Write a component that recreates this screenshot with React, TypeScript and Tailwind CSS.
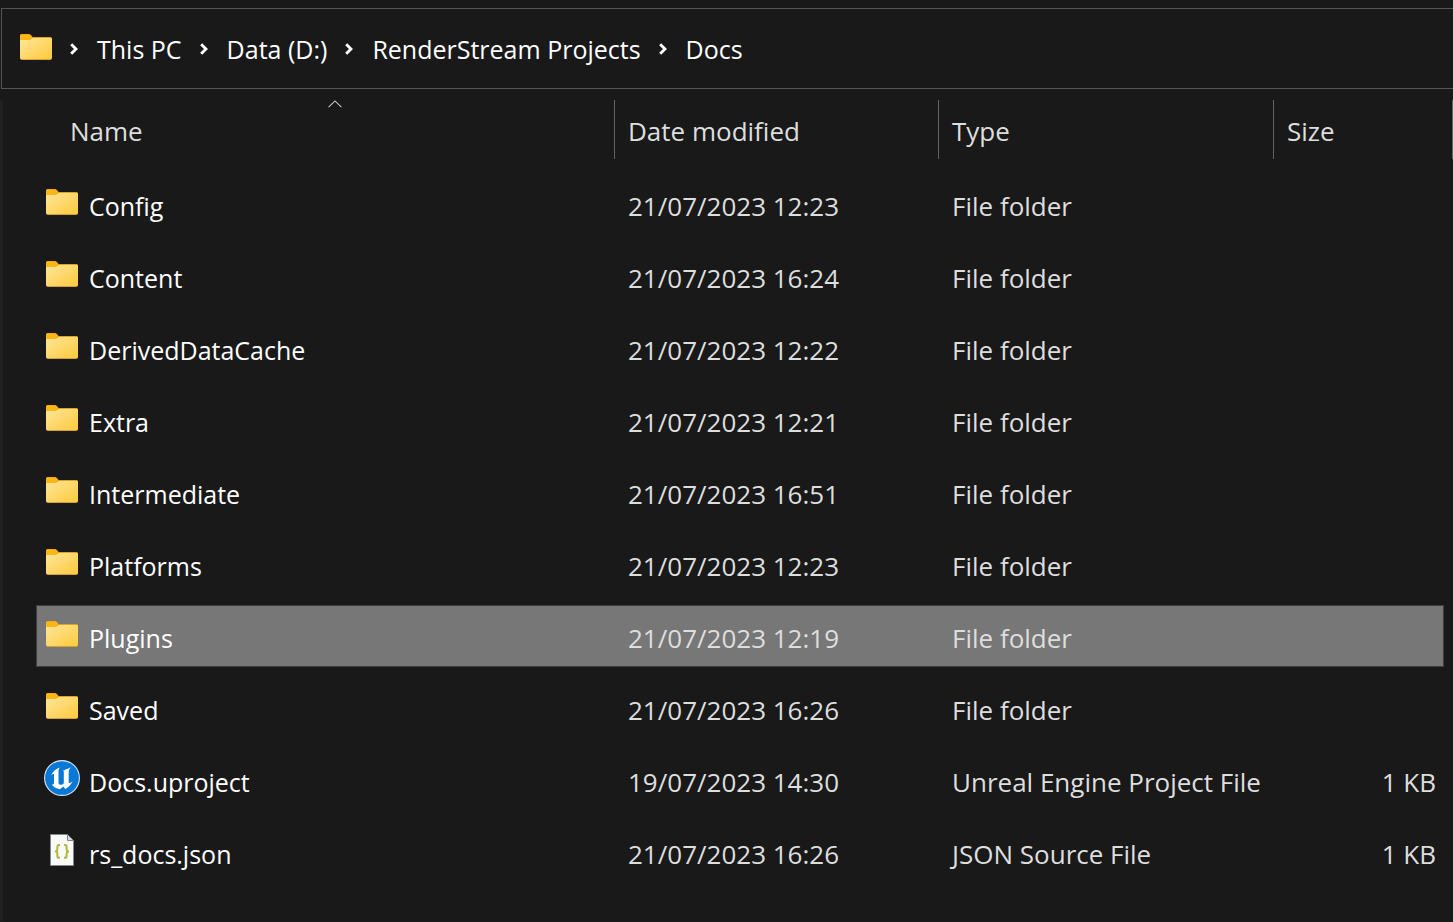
import React from 'react';

type FileKind = 'folder' | 'uproject' | 'json';

interface FileEntry {
  name: string;
  modified: string;
  type: string;
  kind: FileKind;
  size?: string;
  selected?: boolean;
}

const BREADCRUMBS = ['This PC', 'Data (D:)', 'RenderStream Projects', 'Docs'];

const FILES: FileEntry[] = [
  { name: 'Config', modified: '21/07/2023 12:23', type: 'File folder', kind: 'folder' },
  { name: 'Content', modified: '21/07/2023 16:24', type: 'File folder', kind: 'folder' },
  { name: 'DerivedDataCache', modified: '21/07/2023 12:22', type: 'File folder', kind: 'folder' },
  { name: 'Extra', modified: '21/07/2023 12:21', type: 'File folder', kind: 'folder' },
  { name: 'Intermediate', modified: '21/07/2023 16:51', type: 'File folder', kind: 'folder' },
  { name: 'Platforms', modified: '21/07/2023 12:23', type: 'File folder', kind: 'folder' },
  { name: 'Plugins', modified: '21/07/2023 12:19', type: 'File folder', kind: 'folder', selected: true },
  { name: 'Saved', modified: '21/07/2023 16:26', type: 'File folder', kind: 'folder' },
  { name: 'Docs.uproject', modified: '19/07/2023 14:30', type: 'Unreal Engine Project File', kind: 'uproject', size: '1 KB' },
  { name: 'rs_docs.json', modified: '21/07/2023 16:26', type: 'JSON Source File', kind: 'json', size: '1 KB' },
];

const FolderIcon = () => (
  <svg width="32" height="26" viewBox="0 0 32 26" aria-hidden="true">
    <defs>
      <linearGradient id="folder-front" x1="0" y1="0" x2="1" y2="1">
        <stop offset="0" stopColor="#ffe69c" />
        <stop offset="1" stopColor="#ffca3a" />
      </linearGradient>
    </defs>
    <path d="M0 1.5Q0 0 1.5 0H8.5Q10 0 11 1.2L12.6 3H30.5Q32 3 32 4.5V12H0Z" fill="#e0a21c" />
    <path d="M0 1.5Q0 .4 1.5 .4H8.5Q10 .4 11 1.5L12 3.2L9 6H0Z" fill="#fdb614" />
    <path d="M0 6H8.6Q10 6 10.8 5.2Q12 4 13.2 4H30.8Q32 4 32 5.2V24Q32 25.4 30.6 25.4H1.4Q0 25.4 0 24Z" fill="url(#folder-front)" />
    <path d="M.4 24.6Q.8 25.5 1.6 25.5H30.4Q31.2 25.5 31.6 24.6" fill="none" stroke="#d6a233" strokeWidth="1" />
  </svg>
);

const UnrealIcon = () => (
  <svg width="36" height="36" viewBox="0 0 36 36" aria-hidden="true">
    <circle cx="18" cy="18" r="17.4" fill="#0a78d6" stroke="#d4e4f2" strokeWidth="1.1" />
    <path
      d="M7 15.6C8.6 11.6 11.6 8.6 16.2 7.4C14.9 8.6 14.5 9.6 14.5 11V22.6C14.5 24 15.3 24.8 16.6 24.8C17.9 24.8 19 24.2 19.8 23.2V12.4C19.8 11.2 19.4 10.7 18.2 10.9C20.8 9.8 23.6 8.9 27 7.2C25.4 8.9 24.7 9.9 24.7 11.4V22C24.7 23.4 25.6 23.8 28.6 21.2C26.8 25 24.4 27.2 21.4 29L19.2 26.6L16 29.2C12.2 28.8 9 26.8 7.8 24.6C9.4 24.6 10 23.9 10 22.4V14.6C10 13 8.8 13.4 7 15.6Z"
      fill="#ffffff"
    />
  </svg>
);

const JsonIcon = () => (
  <svg width="24" height="32" viewBox="0 0 24 32" aria-hidden="true">
    <path d="M.5 .5H17.5L23.5 6.5V31.5H.5Z" fill="#f8f9fa" stroke="#858585" />
    <path d="M17.5 .5V6.5H23.5Z" fill="#d8d8d8" stroke="#858585" />
    <path
      d="M10 11H9Q7.4 11 7.4 12.6V15Q7.4 17.4 5 17.4Q7.4 17.4 7.4 19.8V22.2Q7.4 23.8 9 23.8H10M14 11H15Q16.6 11 16.6 12.6V15Q16.6 17.4 19 17.4Q16.6 17.4 16.6 19.8V22.2Q16.6 23.8 15 23.8H14"
      fill="none"
      stroke="#b5b834"
      strokeWidth="2"
    />
  </svg>
);

const FileIcon: React.FC<{ kind: FileKind }> = ({ kind }) => {
  switch (kind) {
    case 'uproject': return <UnrealIcon />;
    case 'json': return <JsonIcon />;
    default: return <FolderIcon />;
  }
};

const Chevron = () => (
  <svg width="8" height="12" viewBox="0 0 8 12" className="mt-1" aria-hidden="true">
    <path d="M1.2 1.2L6 6L1.2 10.8" fill="none" stroke="#ffffff" strokeWidth="2.9" />
  </svg>
);

const SortCaret = () => (
  <svg width="14" height="8" viewBox="0 0 14 8" className="self-center" aria-hidden="true">
    <path d="M.6 7.2L7 .9L13.4 7.2" fill="none" stroke="#c8c8c8" strokeWidth="1.1" />
  </svg>
);

const AddressBar = () => (
  <nav aria-label="Address" className="mt-2 ml-px flex h-[81px] items-center border border-r-0 border-[#555555] pb-1 pl-[18px] text-[25px] text-white">
    <FolderIcon />
    <ol className="flex items-center">
      {BREADCRUMBS.map(crumb => (
        <li key={crumb} className="flex items-center pl-[18px]">
          <Chevron />
          <a href="#" className="pt-1 pl-[19px]">{crumb}</a>
        </li>
      ))}
    </ol>
  </nav>
);

const HeaderCell: React.FC<{ label: string }> = ({ label }) => (
  <th scope="col" className="p-0 text-left align-top font-normal">
    <div className="flex h-[59px] items-center border-l border-[#636363] pt-[2px] pl-[13px]">
      <button type="button">{label}</button>
    </div>
  </th>
);

const FileRow: React.FC<{ file: FileEntry }> = ({ file }) => {
  const cell = file.selected ? 'border-y border-[#3f3f3f] bg-[#777777]' : 'border-y border-transparent';

  return (
    <tr aria-selected={file.selected}>
      <td className={`h-[62px] border-l p-0 text-[25px] text-white ${cell}`}>
        <div className="flex items-center pl-[7px]">
          <span className="flex w-9 shrink-0 justify-center pb-1">
            <FileIcon kind={file.kind} />
          </span>
          <span className="pt-1 pl-[9px]">{file.name}</span>
        </div>
      </td>
      <td className={`p-0 pt-1 pl-[14px] ${cell}`}>{file.modified}</td>
      <td className={`p-0 pt-1 pl-[14px] ${cell}`}>{file.type}</td>
      <td className={`border-r p-0 pt-1 pr-[7px] text-right ${cell}`}>{file.size}</td>
    </tr>
  );
};

const App: React.FC = () => (
  <div className="flex min-h-screen flex-col overflow-x-hidden bg-[#191919] font-['Open_Sans','Noto_Sans',sans-serif] text-[26px] leading-9 text-[#dedede]">
    <AddressBar />
    <main className="mt-[11px] flex-1 border-l-[3px] border-[#202020] pl-[33px]">
      <table className="-mt-[10px] w-full table-fixed border-separate border-spacing-x-0 border-spacing-y-[10px] whitespace-nowrap">
        <colgroup>
          <col className="w-[578px]" />
          <col className="w-[324px]" />
          <col className="w-[335px]" />
          <col />
          <col className="w-[9px]" />
        </colgroup>
        <thead>
          <tr className="h-[63px]">
            <th scope="col" aria-sort="ascending" className="p-0 pl-5 text-left align-top font-normal">
              <div className="flex h-[59px] flex-col">
                <SortCaret />
                <button type="button" className="mt-[5px] self-start pl-[14px]">Name</button>
              </div>
            </th>
            <HeaderCell label="Date modified" />
            <HeaderCell label="Type" />
            <HeaderCell label="Size" />
            <td className="p-0 align-top">
              <div className="h-[59px] border-r border-[#636363]" />
            </td>
          </tr>
        </thead>
        <tbody>
          {FILES.map(file => (
            <FileRow key={file.name} file={file} />
          ))}
        </tbody>
      </table>
    </main>
  </div>
);

export default App;
